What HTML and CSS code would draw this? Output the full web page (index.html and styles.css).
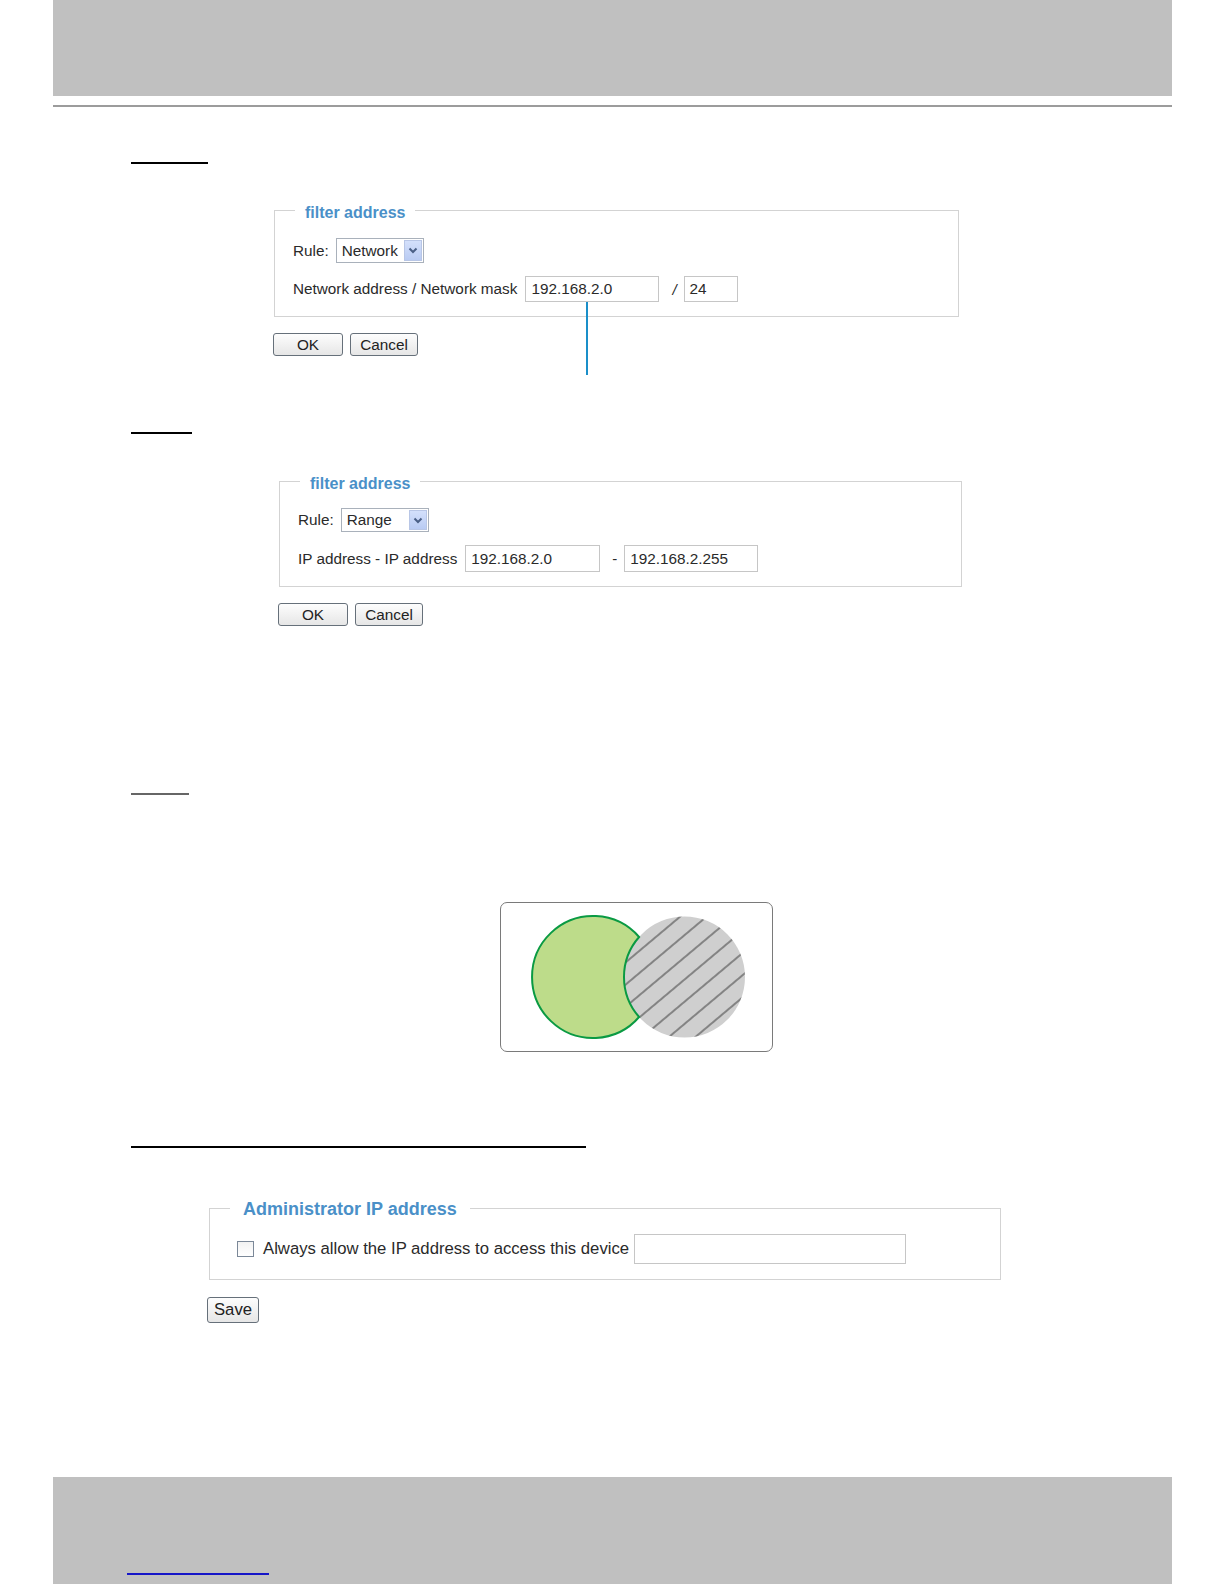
FILE: index.html
```html
<!DOCTYPE html>
<html>
<head>
<meta charset="utf-8">
<link rel="stylesheet" href="styles.css">
</head>
<body>
<div class="page">
  <div class="band band-top"></div>
  <div class="hr"></div>

  <div class="uline ul1"></div>

  <div class="sec sec1">
    <div class="fs fs1">
      <div class="lg">filter address</div>
      <div class="row row-rule">
        <span class="lbl">Rule:</span>
        <div class="sel sel-net"><span class="sel-txt">Network</span><span class="sel-btn"><svg width="10" height="7" viewBox="0 0 10 7"><path d="M1.5 1.5 L5 5 L8.5 1.5" fill="none" stroke="#4a5f86" stroke-width="2"/></svg></span></div>
      </div>
      <div class="row row-net">
        <span class="lbl">Network address / Network mask</span>
        <div class="inp inp-net">192.168.2.0</div>
        <span class="sep sep-slash">/</span>
        <div class="inp inp-mask">24</div>
      </div>
    </div>
    <div class="btns">
      <button class="btn btn-ok">OK</button>
      <button class="btn btn-cancel">Cancel</button>
    </div>
    <div class="callout"></div>
  </div>

  <div class="uline ul2"></div>

  <div class="sec sec2">
    <div class="fs fs2">
      <div class="lg">filter address</div>
      <div class="row row-rule2">
        <span class="lbl">Rule:</span>
        <div class="sel sel-range"><span class="sel-txt">Range</span><span class="sel-btn"><svg width="10" height="7" viewBox="0 0 10 7"><path d="M1.5 1.5 L5 5 L8.5 1.5" fill="none" stroke="#4a5f86" stroke-width="2"/></svg></span></div>
      </div>
      <div class="row row-ip">
        <span class="lbl">IP address - IP address</span>
        <div class="inp inp-ip1">192.168.2.0</div>
        <span class="sep sep-dash">-</span>
        <div class="inp inp-ip2">192.168.2.255</div>
      </div>
    </div>
    <div class="btns">
      <button class="btn btn-ok">OK</button>
      <button class="btn btn-cancel">Cancel</button>
    </div>
  </div>

  <div class="uline ul3"></div>

  <div class="venn">
    <svg width="273" height="150" viewBox="0 0 273 150">
      <defs>
        <pattern id="hatch" patternUnits="userSpaceOnUse" width="17" height="17" patternTransform="rotate(-40)">
          <line x1="0" y1="8" x2="17" y2="8" stroke="#111" stroke-width="0.8"/>
        </pattern>
      </defs>
      <circle cx="184.5" cy="75" r="60.5" fill="#cfcfcf"/>
      <circle cx="184.5" cy="75" r="60.5" fill="url(#hatch)"/>
      <path d="M139.1 35 A61 61 0 1 0 139.1 115 A60.5 60.5 0 0 1 139.1 35 Z" fill="#bddc8a" stroke="#0a9a43" stroke-width="2"/>
    </svg>
  </div>

  <div class="uline ul4"></div>

  <div class="sec sec4">
    <div class="fs fs-admin">
      <div class="lg lg-admin">Administrator IP address</div>
      <div class="row row-admin">
        <span class="chk"></span>
        <span class="lbl lbl-admin">Always allow the IP address to access this device</span>
        <div class="inp inp-admin"></div>
      </div>
    </div>
    <div class="btns btns-save">
      <button class="btn btn-save">Save</button>
    </div>
  </div>

  <div class="band band-bottom">
    <span class="link-line"></span>
  </div>
</div>
</body>
</html>
```

FILE: styles.css
```css
* { box-sizing: border-box; }
html, body { margin: 0; padding: 0; background: #fff; }
body {
  font-family: "Liberation Sans", Arial, sans-serif;
  color: #2a2a2a;
}
.page {
  width: 1119px;
  margin-left: 53px;
}
.band {
  background: #c0c0c0;
}
.band-top { height: 96px; }
.hr {
  margin-top: 9px;
  height: 2px;
  background: #9c9c9c;
}
.uline {
  height: 2px;
  background: #000;
  margin-left: 78px;
}
.ul1 { width: 77px; margin-top: 55px; }
.ul2 { width: 61px; margin-top: 76px; }
.ul3 { width: 58px; margin-top: 167px; background: #666; }
.ul4 { width: 455px; margin-top: 94px; }

.sec { position: relative; }
.sec1 { margin-left: 220px; margin-top: 46px; }
.sec2 { margin-left: 225px; margin-top: 47px; }
.sec4 { margin-left: 155px; margin-top: 60px; }

.fs {
  border: 1px solid #d3d3d3;
}
.fs1 { width: 685px; height: 107px; margin-left: 1px; }
.fs2 { width: 683px; height: 106px; margin-left: 1px; }
.fs-admin { width: 792px; height: 72px; margin-left: 1px; }

.lg {
  display: table;
  margin-top: -8px;
  margin-left: 20px;
  padding: 0 10px;
  background: #fff;
  font-weight: bold;
  font-size: 16px;
  line-height: 20px;
  color: #4a90c8;
}
.lg-admin {
  font-size: 18px;
  line-height: 22px;
  margin-top: -11px;
  padding: 0 13px;
}

.row {
  display: flex;
  align-items: center;
  padding-left: 18px;
  font-size: 15.3px;
}
.row-rule { margin-top: 15px; height: 25px; }
.row-net { margin-top: 13px; height: 26px; }
.row-rule2 { margin-top: 14px; height: 24px; }
.row-ip { margin-top: 13px; height: 27px; }
.row-admin { margin-top: 14px; height: 30px; padding-left: 27px; font-size: 16.7px; }

.lbl { white-space: nowrap; }
.row-rule .lbl, .row-rule2 .lbl { margin-right: 7px; }
.row-net .lbl { margin-right: 8px; }
.row-ip .lbl { margin-right: 8px; }

.sel {
  position: relative;
  height: 100%;
  border: 1px solid #a9b1bb;
  background: #fff;
  display: flex;
  align-items: center;
}
.sel-net { width: 88px; }
.sel-range { width: 88px; }
.sel-txt { padding-left: 5px; }
.sel-btn {
  position: absolute;
  right: 1px;
  top: 1px;
  bottom: 1px;
  width: 18px;
  background: linear-gradient(#d4e0fb, #b9cbf3);
  border: 1px solid #b8c6e6;
  display: flex;
  align-items: center;
  justify-content: center;
}

.inp {
  height: 100%;
  border: 1px solid #c6c6c6;
  background: #fff;
  display: flex;
  align-items: center;
  padding-left: 5px;
}
.inp-net { width: 134px; }
.inp-mask { width: 54px; }
.inp-ip1 { width: 135px; }
.inp-ip2 { width: 134px; }
.inp-admin { width: 272px; margin-left: 5px; }

.sep { font-size: 15px; }
.sep-slash { margin: 0 7px 0 13px; font-style: italic; }
.sep-dash { margin: 0 7px 0 12px; }

.chk {
  width: 17px;
  height: 16px;
  border: 1px solid #7b8898;
  background: linear-gradient(#f2f2f2, #fff);
  margin-right: 9px;
  flex: none;
}

.btns {
  display: flex;
  gap: 7px;
  margin-top: 16px;
}
.btn {
  font-family: "Liberation Sans", Arial, sans-serif;
  font-size: 15.3px;
  color: #222;
  height: 23px;
  padding: 0;
  border: 1px solid #66707a;
  border-radius: 3px;
  background: linear-gradient(#fdfdfd, #e6e6e6);
  line-height: 20px;
}
.btn-ok { width: 70px; }
.btn-cancel { width: 68px; }
.btns-save { margin-top: 17px; }
.btn-save { width: 52px; height: 26px; font-size: 16.7px; margin-left: -1px; }

.callout {
  position: absolute;
  left: 313px;
  top: 92px;
  width: 2px;
  height: 73px;
  background: #1a8fc9;
}

.venn {
  margin-left: 447px;
  margin-top: 107px;
  width: 273px;
  height: 150px;
  border: 1px solid #7a7a7a;
  border-radius: 7px;
  overflow: hidden;
}
.venn svg { display: block; margin: -1px; }

.band-bottom {
  position: relative;
  margin-top: 154px;
  height: 108px;
}
.link-line {
  position: absolute;
  left: 74px;
  top: 96px;
  width: 142px;
  height: 2px;
  background: #1515c8;
}
```
